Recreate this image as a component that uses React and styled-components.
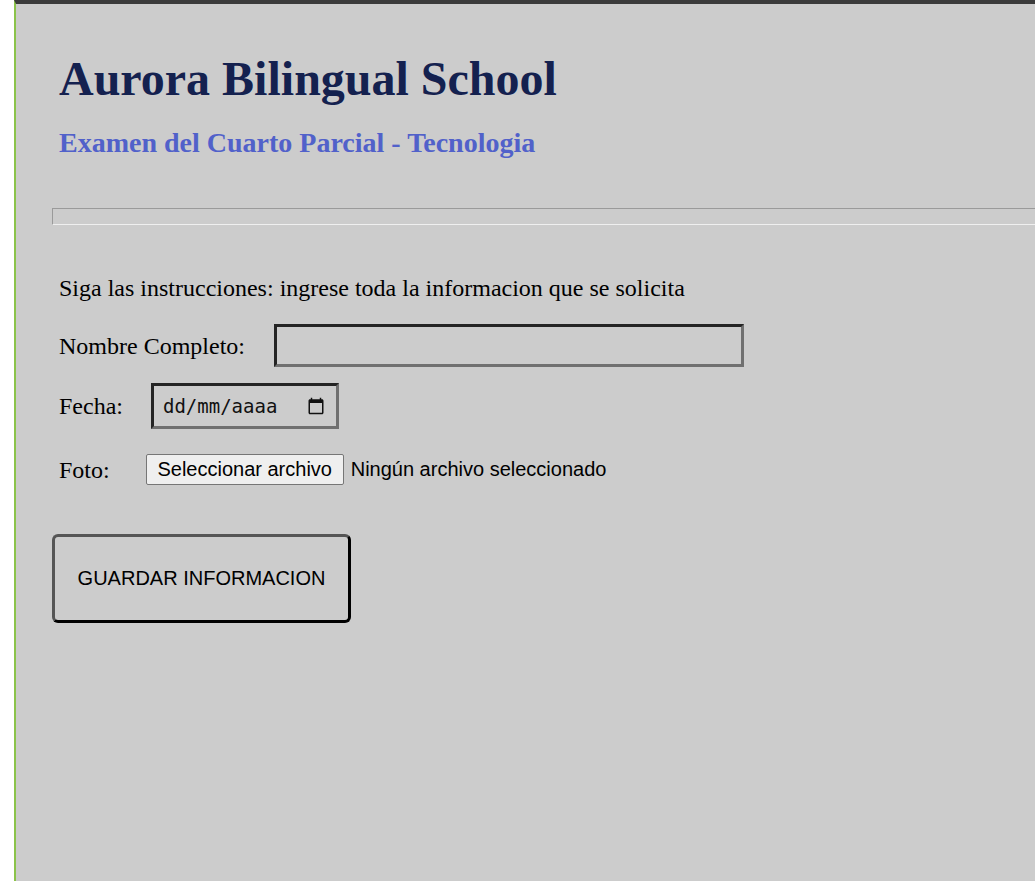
import React from "react";
import styled, { createGlobalStyle } from "styled-components";

const Global = createGlobalStyle`
  html, body { margin: 0; padding: 0; background: #ffffff; }
  body { font-family: "Liberation Serif", "Times New Roman", serif; }
`;

const Page = styled.div`
  margin-left: 14px;
  min-height: 100vh;
  box-sizing: border-box;
  background: #cccccc;
  border-left: 2px solid #8bc34a;
  border-top: 4px solid #3b3b3b;
  padding: 47px 0 40px 36px;
  overflow: hidden;
`;

const Header = styled.header`
  padding-left: 7px;
`;

const Title = styled.h1`
  margin: 0;
  font-size: 48px;
  line-height: 56px;
  font-weight: bold;
  color: #14214f;
`;

const Subtitle = styled.h2`
  margin: 20px 0 0;
  font-size: 28px;
  line-height: 32px;
  font-weight: bold;
  color: #5161ca;
`;

const Divider = styled.hr`
  margin: 49px -30px 0 0;
  height: 15px;
  border: 0;
  border-top: 1px solid #9a9a9a;
  border-left: 1px solid #9a9a9a;
  border-bottom: 1px solid #efefef;
`;

const Form = styled.form`
  display: flex;
  flex-direction: column;
  align-items: flex-start;
`;

const Instructions = styled.p`
  margin: 49px 0 0 7px;
  font-size: 24px;
  line-height: 28px;
  color: #000;
`;

const Row = styled.div`
  display: flex;
  align-items: center;
  gap: ${(p) => p.$gap}px;
  margin-top: ${(p) => p.$top}px;
  padding-left: 7px;
`;

const Label = styled.label`
  font-size: 24px;
  line-height: 28px;
  color: #000;
`;

const TextInput = styled.input`
  box-sizing: border-box;
  width: 470px;
  height: 43px;
  margin: 0;
  padding: 0 8px;
  background: transparent;
  border: 3px solid;
  border-color: #242424 #707070 #707070 #242424;
  font-size: 20px;
  outline: none;
`;

const DateBox = styled.div`
  box-sizing: border-box;
  width: 188px;
  height: 46px;
  display: flex;
  align-items: center;
  justify-content: space-between;
  padding: 0 11px 0 9px;
  border: 3px solid;
  border-color: #242424 #707070 #707070 #242424;
  font-family: "DejaVu Sans Mono", monospace;
  font-size: 19px;
  color: #111;
`;

const FileWrap = styled.div`
  display: flex;
  align-items: center;
  gap: 7px;
  font-family: "Liberation Sans", Arial, sans-serif;
  font-size: 20px;
  color: #000;
`;

const FileButton = styled.button`
  box-sizing: border-box;
  height: 31px;
  width: 198px;
  margin: 0;
  padding: 0;
  background: #efefef;
  border: 1px solid #767676;
  border-radius: 2px;
  font-family: "Liberation Sans", Arial, sans-serif;
  font-size: 20px;
  color: #000;
`;

const SaveButton = styled.button`
  box-sizing: border-box;
  margin-top: 49px;
  width: 299px;
  height: 89px;
  background: transparent;
  border: 3px solid;
  border-color: #555555 #000000 #000000 #555555;
  border-radius: 6px;
  font-family: "Liberation Sans", Arial, sans-serif;
  font-size: 20px;
  color: #000;
  padding: 0;
`;

const CalendarIcon = () => (
  <svg width="18" height="18" viewBox="0 0 24 24" aria-hidden="true">
    <path
      fill="#111"
      d="M20 3h-1V1h-2v2H7V1H5v2H4c-1.1 0-2 .9-2 2v16c0 1.1.9 2 2 2h16c1.1 0 2-.9 2-2V5c0-1.1-.9-2-2-2zm0 18H4V8h16v13z"
    />
  </svg>
);

export default function App() {
  return (
    <>
      <Global />
      <Page>
        <Header>
          <Title>Aurora Bilingual School</Title>
          <Subtitle>Examen del Cuarto Parcial - Tecnologia</Subtitle>
        </Header>
        <Divider />
        <Form onSubmit={(e) => e.preventDefault()}>
          <Instructions>
            Siga las instrucciones: ingrese toda la informacion que se solicita
          </Instructions>
          <Row $top={22} $gap={29}>
            <Label htmlFor="nombre">Nombre Completo:</Label>
            <TextInput id="nombre" type="text" />
          </Row>
          <Row $top={16} $gap={28}>
            <Label>Fecha:</Label>
            <DateBox>
              <span>dd/mm/aaaa</span>
              <CalendarIcon />
            </DateBox>
          </Row>
          <Row $top={25} $gap={36}>
            <Label>Foto:</Label>
            <FileWrap>
              <FileButton type="button">Seleccionar archivo</FileButton>
              <span>Ningún archivo seleccionado</span>
            </FileWrap>
          </Row>
          <SaveButton type="submit">GUARDAR INFORMACION</SaveButton>
        </Form>
      </Page>
    </>
  );
}
